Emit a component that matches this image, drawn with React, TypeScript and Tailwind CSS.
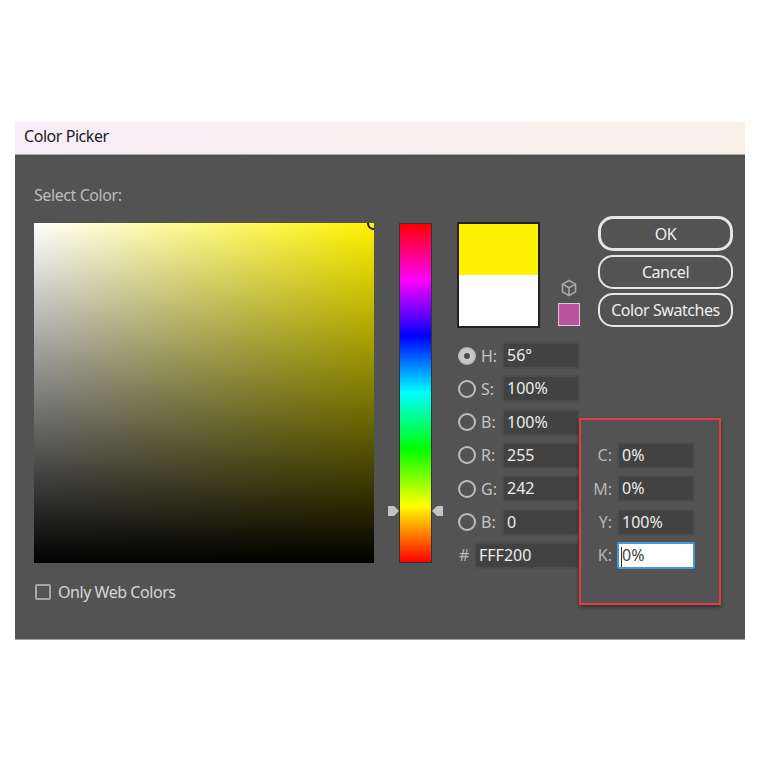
import React from 'react';

const font = "font-['Noto_Sans',sans-serif]";

function Field({ value, width = 'w-[78px]', active = false }: { value: string; width?: string; active?: boolean }) {
  return (
    <div
      className={`relative h-[27px] ${width} rounded-[2px] border-2 pl-[3px] text-[16px] leading-[23px] ${
        active ? 'border-[#4b94dc] bg-white text-[#444444]' : 'border-[#4d4d4d] bg-[#424242] text-[#ececec]'
      }`}
    >
      {value}
      {/* text caret */}
      {active && <div className="absolute left-[2px] top-[3px] h-[20px] w-px bg-[#333333]" />}
    </div>
  );
}

function Radio({ checked = false }: { checked?: boolean }) {
  return (
    <div
      className={`ml-px flex h-[18px] w-[18px] shrink-0 items-center justify-center rounded-full border-2 border-[#bdbdbd] ${
        checked ? 'bg-[#c9c9c9]' : ''
      }`}
    >
      {checked && <div className="h-[6px] w-[6px] rounded-full bg-[#4a4a4a]" />}
    </div>
  );
}

function ColorRow({ label, value, checked }: { label: string; value: string; checked?: boolean }) {
  return (
    <div className="flex h-[27px] items-center">
      <Radio checked={checked} />
      <span className="ml-[5px] w-[21px] text-[16px] text-[#c4c4c4]">{label}</span>
      <Field value={value} />
    </div>
  );
}

function CmykRow({ label, value, active }: { label: string; value: string; active?: boolean }) {
  return (
    <div className="flex h-[27px] items-center justify-end gap-[5px]">
      <span className="text-[16px] text-[#b5b5b5]">{label}</span>
      <Field value={value} active={active} />
    </div>
  );
}

function DialogButton({ label, primary = false }: { label: string; primary?: boolean }) {
  return (
    <div
      className={`flex w-[135px] items-center justify-center rounded-[15px] border-[#e6e6e6] text-[16px] tracking-[-0.43px] text-[#eeeeee] ${
        primary ? 'h-[35px] border-[3px]' : 'h-[34px] border-2'
      }`}
    >
      {label}
    </div>
  );
}

export default function App() {
  return (
    <div className={`h-[760px] w-[760px] bg-white pl-[15px] pt-[122px] ${font}`}>
      <div className="w-[730px]">
        <div className="flex h-[33px] items-center border-b border-[#a8a8a8] bg-linear-to-r/srgb from-[#f8eef7] to-[#f8f1ea] pb-[4px] pl-[9px] text-[16px] tracking-[-0.45px] text-[#1c1c1c]">
          Color Picker
        </div>

        <div className="relative flex h-[485px] border-b border-[#a0a0a0] bg-[#535353] pl-[19px]">
          {/* Saturation / brightness square */}
          <div className="w-[340px] pt-[28px]">
            <div className="h-[24px] text-[16px] leading-[24px] tracking-[-0.42px] text-[#bcbcbc]">Select Color:</div>
            <div className="relative mt-[16px] h-[340px] w-[340px] overflow-hidden bg-linear-to-r/srgb from-white to-[#fff200]">
              <div className="h-full w-full bg-linear-to-b/srgb from-black/0 to-black" />
              <div className="absolute right-[-6px] top-[-6px] h-[13px] w-[13px] rounded-full border-2 border-[#222222]" />
            </div>
            <div className="mt-[17px] flex items-center gap-[7px] pl-px">
              <div className="h-[16px] w-[16px] rounded-[2px] border-2 border-[#a5a5a5]" />
              <span className="text-[16px] tracking-[-0.45px] text-[#d6d6d6]">Only Web Colors</span>
            </div>
          </div>

          {/* Hue strip */}
          <div className="ml-[25px] pt-[68px]">
            <div className="relative h-[340px] w-[33px] border border-[#333333] bg-[linear-gradient(to_bottom,#ff0000,#ff00ff,#0000ff,#00ffff,#00ff00,#ffff00,#ff0000)]">
              <svg className="absolute left-[-12px] top-[281px]" width="11" height="12" viewBox="0 0 11 12">
                <path d="M0 1h6l5 5-5 5H0z" fill="#c4c4c4" />
              </svg>
              <svg className="absolute right-[-12px] top-[281px]" width="11" height="12" viewBox="0 0 11 12">
                <path d="M11 1H5L0 6l5 5h6z" fill="#c4c4c4" />
              </svg>
            </div>
          </div>

          <div className="ml-[25px] w-[276px] pt-[61px]">
            <div className="flex h-[112px] items-start">
              <div className="mt-[6px] flex h-[106px] w-[83px] flex-col border-2 border-[#222222]">
                <div className="h-[51px] bg-[#fff200]" />
                <div className="flex-1 bg-white" />
              </div>
              <div className="ml-[18px] flex w-[22px] flex-col items-center pt-[63px]">
                <svg width="18" height="18" viewBox="0 0 18 18" fill="none" stroke="#a8a8a8" strokeWidth="1.6">
                  <path d="M9 1.5l6.5 3.6v7.8L9 16.5l-6.5-3.6V5.1z" />
                  <path d="M2.5 5.1L9 8.8l6.5-3.7M9 8.8v7.7" />
                </svg>
                <div className="mt-[6px] h-[23px] w-[22px] border border-[#e0c8dc] bg-[#b9529f]" />
              </div>
              <div className="ml-[18px] flex flex-col gap-[4px]">
                <DialogButton label="OK" primary />
                <DialogButton label="Cancel" />
                <DialogButton label="Color Swatches" />
              </div>
            </div>

            <div className="mt-[14px] grid grid-cols-[123px_115px] grid-rows-[repeat(7,27px)] gap-y-[6.33px]">
              <div className="col-start-1 row-start-1"><ColorRow label="H:" value="56°" checked /></div>
              <div className="col-start-1 row-start-2"><ColorRow label="S:" value="100%" /></div>
              <div className="col-start-1 row-start-3"><ColorRow label="B:" value="100%" /></div>
              <div className="col-start-1 row-start-4"><ColorRow label="R:" value="255" /></div>
              <div className="col-start-1 row-start-5"><ColorRow label="G:" value="242" /></div>
              <div className="col-start-1 row-start-6"><ColorRow label="B:" value="0" /></div>
              <div className="col-start-1 row-start-7 flex items-center">
                <span className="ml-[2px] w-[15px] text-[16px] text-[#b5b5b5]">#</span>
                <Field value="FFF200" width="w-[106px]" />
              </div>
              <div className="col-start-2 row-start-4"><CmykRow label="C:" value="0%" /></div>
              <div className="col-start-2 row-start-5"><CmykRow label="M:" value="0%" /></div>
              <div className="col-start-2 row-start-6"><CmykRow label="Y:" value="100%" /></div>
              <div className="col-start-2 row-start-7"><CmykRow label="K:" value="0%" active /></div>
            </div>
          </div>

          {/* red annotation box drawn over the dialog */}
          <div className="absolute left-[564px] top-[263px] h-[187px] w-[142px] border-2 border-[#e23b40] shadow-[0_2px_4px_rgba(0,0,0,0.45)]" />
        </div>
      </div>
    </div>
  );
}
